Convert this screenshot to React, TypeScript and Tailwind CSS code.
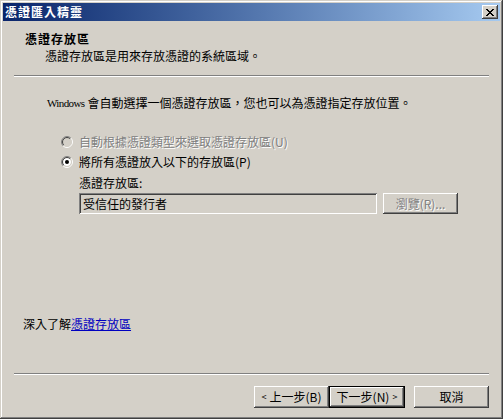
import React from "react";

const F = "font-['Noto_Sans_CJK_TC','Noto_Sans_CJK_JP',sans-serif]";
const DIS = "text-[#808080] [text-shadow:1px_1px_0_#ffffff]";

function Radio({ checked, disabled }: { checked?: boolean; disabled?: boolean }) {
  return (
    <svg width="12" height="12" viewBox="0 0 12 12" className="shrink-0 block">
      <circle cx="6" cy="6" r="4" fill={disabled ? "#d4d0c8" : "#ffffff"} />
      <path d="M2.111 9.889 A5.5 5.5 0 0 1 9.889 2.111" stroke="#808080" fill="none" />
      <path d="M9.889 2.111 A5.5 5.5 0 0 1 2.111 9.889" stroke="#ffffff" fill="none" />
      <path d="M2.818 9.182 A4.5 4.5 0 0 1 9.182 2.818" stroke="#404040" fill="none" />
      <path d="M9.182 2.818 A4.5 4.5 0 0 1 2.818 9.182" stroke="#d4d0c8" fill="none" />
      {checked && <circle cx="6" cy="6" r="2" fill="#000000" />}
    </svg>
  );
}

const BEVEL =
  "shadow-[inset_-1px_-1px_#404040,inset_1px_1px_#ffffff,inset_-2px_-2px_#808080,inset_2px_2px_#d4d0c8]";

function Btn({
  children,
  def,
  disabled,
  className,
}: {
  children: React.ReactNode;
  def?: boolean;
  disabled?: boolean;
  className?: string;
}) {
  return (
    <div className={`${className ?? ""} h-[22px] bg-[#d4d0c8] ${def ? "border border-black" : ""}`}>
      <div
        className={`h-full w-full ${BEVEL} flex items-center justify-center text-[12px] leading-[12px] ${
          disabled ? DIS : "text-black"
        }`}
      >
        {children}
      </div>
    </div>
  );
}

function CloseX() {
  const px: [number, number][] = [
    [0, 0], [1, 0], [6, 0], [7, 0],
    [1, 1], [2, 1], [5, 1], [6, 1],
    [2, 2], [3, 2], [4, 2], [5, 2],
    [3, 3], [4, 3],
    [2, 4], [3, 4], [4, 4], [5, 4],
    [1, 5], [2, 5], [5, 5], [6, 5],
    [0, 6], [1, 6], [6, 6], [7, 6],
  ];
  return (
    <svg width="8" height="7" viewBox="0 0 8 7" className="block" shapeRendering="crispEdges">
      {px.map(([x, y], i) => (
        <rect key={i} x={x} y={y} width="1" height="1" fill="#000" />
      ))}
    </svg>
  );
}

export default function App() {
  return (
    <div
      className={`${F} w-[503px] h-[419px] bg-[#d4d0c8] p-[3px] flex flex-col shadow-[inset_-1px_-1px_#404040,inset_1px_1px_#d4d0c8,inset_-2px_-2px_#808080,inset_2px_2px_#ffffff] select-none`}
    >
      {/* Title bar */}
      <div className="h-[18px] shrink-0 bg-linear-to-r from-[#0a246a] to-[#a6caf0] flex items-center pl-[2px] pr-[2px]">
        <span className="text-white font-bold text-[12px] leading-[12px] tracking-[1px]">憑證匯入精靈</span>
        <div className={`ml-auto w-[16px] h-[14px] bg-[#d4d0c8] ${BEVEL} flex items-center justify-center`}>
          <CloseX />
        </div>
      </div>

      {/* Body */}
      <div className="flex-1 flex flex-col text-[12px] leading-[12px] text-black">
        <div className="mt-[12px] ml-[22px] font-bold tracking-[1px]">憑證存放區</div>
        <div className="mt-[5px] ml-[42px]">憑證存放區是用來存放憑證的系統區域。</div>
        <div className="mt-[13px] mx-[11px] h-[2px] border-t border-t-[#808080] border-b border-b-white" />

        <div className="mt-[20px] ml-[44px] whitespace-nowrap flex items-center">
          <span className="inline-block font-['Liberation_Serif',serif] text-[11px] tracking-[-0.6px] mr-[3px]">Windows</span>
          <span>會自動選擇一個憑證存放區，您也可以為憑證指定存放位置。</span>
        </div>

        <div className="mt-[27px] ml-[58px] flex items-center gap-[6px]">
          <Radio disabled />
          <span className={DIS}>自動根據憑證類型來選取憑證存放區(U)</span>
        </div>
        <div className="mt-[8px] ml-[58px] flex items-center gap-[6px]">
          <Radio checked />
          <span>將所有憑證放入以下的存放區(P)</span>
        </div>
        <div className="mt-[9px] ml-[76px]">憑證存放區:</div>
        <div className="mt-[4px] ml-[76px] flex items-center">
          <div className="w-[298px] h-[21px] bg-[#d4d0c8] shadow-[inset_1px_1px_#808080,inset_-1px_-1px_#ffffff,inset_2px_2px_#404040,inset_-2px_-2px_#d4d0c8] flex items-center pl-[4px]">
            受信任的發行者
          </div>
          <Btn disabled className="ml-[6px] w-[75px] !h-[21px]">
            瀏覽(R)...
          </Btn>
        </div>

        <div className="mt-[104px] ml-[20px]">
          深入了解<span className="text-[#0000c0] underline">憑證存放區</span>
        </div>

        <div className="mt-[43px] mx-[11px] h-[2px] border-t border-t-[#808080] border-b border-b-white" />

        <div className="mt-[11px] mr-[11px] flex justify-end">
          <Btn className="w-[75px]">
            <span className="text-[9px] mr-[3px]">&lt;</span>上一步(B)
          </Btn>
          <Btn def className="w-[76px]">
            下一步(N)<span className="text-[9px] ml-[3px]">&gt;</span>
          </Btn>
          <Btn className="ml-[9px] w-[75px]">取消</Btn>
        </div>
      </div>
    </div>
  );
}
